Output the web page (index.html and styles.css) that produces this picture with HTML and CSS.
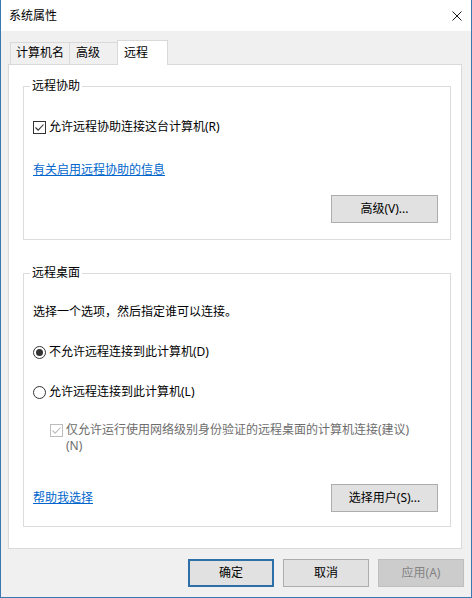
FILE: index.html
```html
<!DOCTYPE html>
<html lang="zh-CN">
<head>
<meta charset="utf-8">
<title>系统属性</title>
<link rel="stylesheet" href="styles.css">
</head>
<body>
<div class="window">
  <div class="titlebar">
    <span class="title">系统属性</span>
    <svg class="close" width="10" height="10" viewBox="0 0 10 10"><path d="M0.5 0.5 L9.5 9.5 M9.5 0.5 L0.5 9.5" stroke="#1a1a1a" stroke-width="1" fill="none"/></svg>
  </div>
  <div class="client">
    <div class="tabs">
      <div class="tab tab-name">计算机名</div>
      <div class="tab tab-adv">高级</div>
      <div class="tab tab-active">远程</div>
    </div>
    <div class="panel">
      <fieldset class="group group-assist">
        <legend>远程协助</legend>
        <label class="check row-allow"><span class="cb"><svg width="11" height="11" viewBox="0 0 11 11"><path d="M1.5 5.5 L4.2 8.2 L9.5 2.5" stroke="#333" stroke-width="1.1" fill="none"/></svg></span>允许远程协助连接这台计算机(R)</label>
        <a class="link link-info" href="#">有关启用远程协助的信息</a>
        <div class="btn-row"><button class="btn">高级(V)...</button></div>
      </fieldset>
      <fieldset class="group group-desktop">
        <legend>远程桌面</legend>
        <p class="hint">选择一个选项，然后指定谁可以连接。</p>
        <label class="radio r-deny"><span class="rb on"></span>不允许远程连接到此计算机(D)</label>
        <label class="radio r-allow"><span class="rb"></span>允许远程连接到此计算机(L)</label>
        <label class="check nla disabled"><span class="cb"><svg width="11" height="11" viewBox="0 0 11 11"><path d="M1.5 5.5 L4.2 8.2 L9.5 2.5" stroke="#bcbcbc" stroke-width="1.1" fill="none"/></svg></span><span class="nla-text">仅允许运行使用网络级别身份验证的远程桌面的计算机连接(建议)<br>(N)</span></label>
        <div class="foot-row"><a class="link" href="#">帮助我选择</a><button class="btn">选择用户(S)...</button></div>
      </fieldset>
    </div>
    <div class="actions">
      <button class="btn btn-default">确定</button>
      <button class="btn">取消</button>
      <button class="btn btn-disabled">应用(A)</button>
    </div>
  </div>
</div>
</body>
</html>
```
FILE: styles.css
```css
* { box-sizing: border-box; }
html, body { margin: 0; padding: 0; }
body {
  width: 472px;
  height: 598px;
  overflow: hidden;
  font: 12px/16px "Noto Sans", "Noto Sans CJK SC", sans-serif;
  color: #000;
  background: #f0f0f0;
}
.window {
  width: 472px;
  height: 598px;
  border: 1px solid #3b78b0;
  border-top: none;
  background: #f0f0f0;
  display: flex;
  flex-direction: column;
}
.titlebar {
  height: 31px;
  flex: none;
  background: #fff;
  display: flex;
  align-items: center;
  justify-content: space-between;
  padding: 0 9px 0 8px;
}
.title { font-size: 12px; line-height: 16px; }
.close { display: block; }

.client {
  flex: 1;
  padding: 9px 9px 0 7px;
  display: flex;
  flex-direction: column;
}
.tabs {
  height: 24px;
  display: flex;
  align-items: flex-end;
  padding-left: 2px;
  position: relative;
  z-index: 1;
}
.tab {
  height: 22px;
  border: 1px solid #d9d9d9;
  border-bottom: none;
  background: #f0f0f0;
  padding-left: 6px;
  line-height: 20px;
  white-space: nowrap;
}
.tab-name { width: 60px; padding-left: 5px; }
.tab-adv { width: 51px; margin-left: -1px; }
.tab-active {
  width: 51px;
  height: 25px;
  margin-left: -3px;
  margin-bottom: -1px;
  background: #fff;
  line-height: 23px;
  padding-left: 6px;
}
.panel {
  height: 485px;
  border: 1px solid #d9d9d9;
  background: #fff;
  display: flex;
  flex-direction: column;
}
.group {
  margin: 0 10px 0 14px;
  border: 1px solid #dcdcdc;
  padding: 0 12px 16px 9px;
  min-width: 0;
}
.group legend {
  margin-left: -3px;
  padding: 0 2px;
  line-height: 16px;
}
.group-assist { margin-top: 13px; }
.group-desktop { margin-top: 25px; padding-bottom: 14px; }

.check, .radio {
  display: flex;
  align-items: flex-start;
  line-height: 16px;
}
.cb {
  flex: none;
  width: 13px;
  height: 13px;
  border: 1px solid #333;
  background: #fff;
  margin: 2px 3px 0 0;
  display: flex;
}
.cb svg { display: block; }
.disabled { color: #6d6d6d; }
.disabled .cb { border-color: #bcbcbc; }
.rb {
  flex: none;
  width: 13px;
  height: 13px;
  border: 1px solid #333;
  border-radius: 50%;
  background: #fff;
  margin: 2px 3px 0 0;
  display: flex;
  align-items: center;
  justify-content: center;
}
.rb.on::after {
  content: "";
  width: 7px;
  height: 7px;
  border-radius: 50%;
  background: #333;
}
.row-allow { margin-top: 25px; }
.link {
  display: block;
  width: fit-content;
  color: #0066cc;
  text-decoration: underline;
  line-height: 16px;
}
.link-info { margin-top: 27px; }
.btn-row {
  margin-top: 17px;
  display: flex;
  justify-content: flex-end;
}
.btn {
  width: 107px;
  height: 28px;
  border: 1px solid #adadad;
  background: #e1e1e1;
  font: inherit;
  color: #000;
  padding: 0;
  margin: 0;
}
.hint { margin: 23px 0 0; }
.r-deny { margin-top: 24px; }
.r-allow { margin-top: 24px; }
.nla { margin-top: 22px; margin-left: 17px; }
.nla-text { display: block; }
.foot-row {
  margin-top: 30px;
  display: flex;
  align-items: center;
  justify-content: space-between;
}
.actions {
  margin-top: 10px;
  margin-right: -2px;
  display: flex;
  justify-content: flex-end;
  gap: 9px;
}
.actions .btn { width: 86px; }
.btn-default { border: 2px solid #2f6fa8; }
.btn-disabled {
  background: #cccccc;
  border-color: #bfbfbf;
  color: #838383;
}
```
